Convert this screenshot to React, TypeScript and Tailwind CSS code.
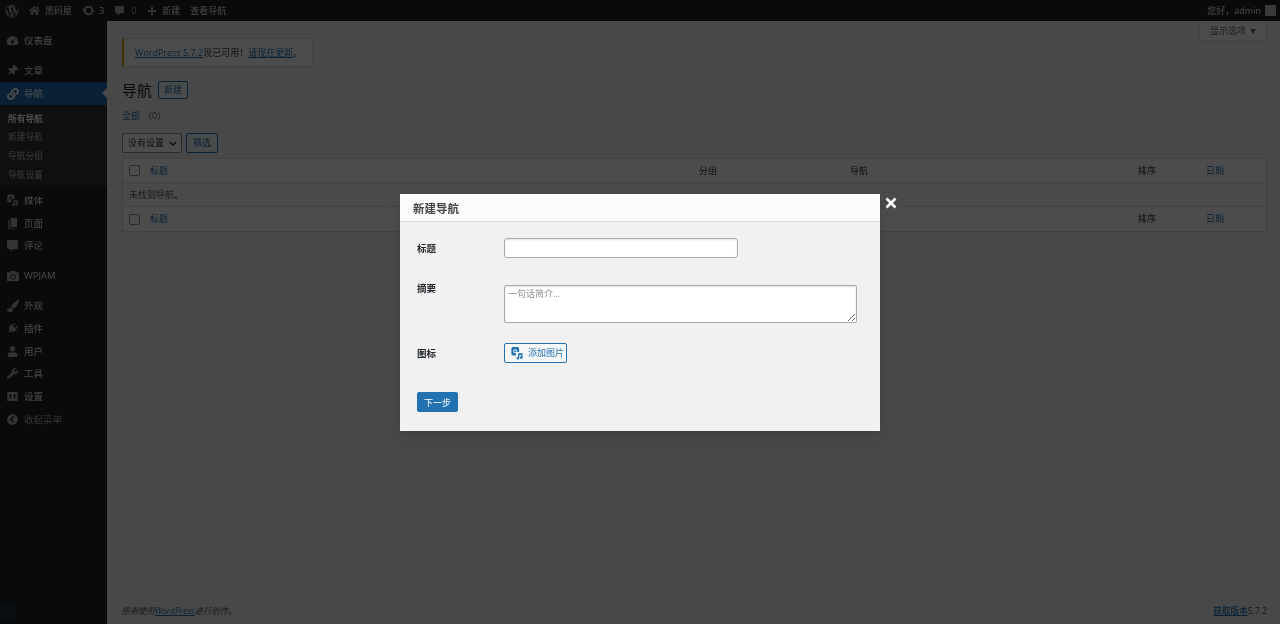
import { FaCommentAlt, FaPlus, FaThumbtack, FaLink, FaPaintBrush, FaPlug, FaUser, FaWrench, FaWordpress, FaHome, FaCamera, FaChevronCircleLeft } from 'react-icons/fa';
import type { ReactNode } from 'react';

const stack = "font-['Open_Sans','Noto_Sans_CJK_SC',sans-serif]";

function MediaIcon({ className }: { className?: string }) {
  return (
    <svg viewBox="0 0 20 20" className={className} fill="currentColor">
      <path fillRule="evenodd" d="M2 4c0-1.4 1.1-2.5 2.5-2.5h6C11.9 1.500 13 2.600 13 4v4.500H10L8.500 10.500V13.500H4.500C3.100 13.500 2 12.400 2 11zM7.500 4.700a2.800 2.800 0 1 0 0 5.600 2.800 2.800 0 0 0 0-5.600z" />
      <circle cx="7.500" cy="7.500" r="1.500" />
      <path d="M11.500 10.500H18v6a1.900 1.900 0 1 1-1.800-1.900V12.800h-2.900v4.700a1.900 1.900 0 1 1-1.800-1.900z" />
    </svg>
  );
}

function DashboardIcon({ className }: { className?: string }) {
  return (
    <svg viewBox="0 0 20 20" className={className} fill="currentColor">
      <path fillRule="evenodd" d="M10 3a9 9 0 0 0-9 9c0 2 .7 3.500 1.700 5h14.600c1-1.500 1.700-3 1.700-5a9 9 0 0 0-9-9zm0 6.500a2.500 2.500 0 1 0 .01 0zM10 13l3.500-5-1.500-.7z" />
    </svg>
  );
}

function UpdateIcon({ className }: { className?: string }) {
  return (
    <svg viewBox="0 0 20 20" className={className} fill="none" stroke="currentColor" strokeWidth="3.200">
      <circle cx="10" cy="10" r="5.800" />
      <path d="M0 10h6L3 6.500zM20 10h-6l3 3.500z" fill="currentColor" stroke="none" />
    </svg>
  );
}

function PagesIcon({ className }: { className?: string }) {
  return (
    <svg viewBox="0 0 20 20" className={className} fill="currentColor">
      <path d="M7 1.500h10v14H7z" />
      <path d="M3.500 4.500H5.500v13h8.500v1.500H3.500z" />
    </svg>
  );
}

function SettingsIcon({ className }: { className?: string }) {
  return (
    <svg viewBox="0 0 20 20" className={className} fill="currentColor">
      <path fillRule="evenodd" d="M2 3h16v14H2zM6 6v3H4.500v1.500H6V14h1.500v-3.500H9V9H7.500V6zM12.500 6v2H11v1.500h1.500V14H14V9.500h1.500V8H14V6z" />
    </svg>
  );
}

function MenuItem({ icon, label, className = '', active = false, muted = false }: { icon: ReactNode; label: string; className?: string; active?: boolean; muted?: boolean }) {
  return (
    <div className={`relative flex h-[22.8px] items-center gap-[5px] pl-[6px] text-[9.5px] ${active ? 'bg-[#2271b1] text-white' : muted ? 'text-[#a7aaad]' : 'text-[#f0f0f1]'} ${className}`}>
      <span className={`flex w-[13px] justify-center ${active ? 'text-white' : 'text-[#a7aaad]'}`}>{icon}</span>
      <span className="pt-[1px]">{label}</span>
      {active && <span className="absolute right-0 top-[6px] h-0 w-0 border-y-[5px] border-r-[5px] border-y-transparent border-r-[#f0f0f1]" />}
    </div>
  );
}

function TableRow({ foot = false }: { foot?: boolean }) {
  return (
    <div className={`flex h-[24px] items-center text-[9px] text-[#2c3338] ${foot ? '' : 'border-b border-[#dcdcde]'}`}>
      <span className="ml-[6px] h-[11px] w-[11px] rounded-[2px] border border-[#8c8f94] bg-white" />
      <span className="ml-[10px] w-[549px] text-[#2271b1]">标题</span>
      <span className="w-[151px]">分组</span>
      <span className="w-[288px]">导航</span>
      <span className="w-[68px]">排序</span>
      <span className="text-[#2271b1]">日期</span>
    </div>
  );
}

export default function App() {
  return (
    <div className={`relative h-[624px] w-[1280px] overflow-hidden bg-[#f0f0f1] blur-[0.45px] ${stack}`}>
      <header className="flex h-[21px] items-center bg-[#1d2327] pl-[5px] pr-[4px] text-[9px] text-[#f0f0f1]">
        <FaWordpress className="h-[14px] w-[14px] text-[#a7aaad]" />
        <FaHome className="ml-[10px] h-[11px] w-[11px] text-[#a7aaad]" />
        <span className="ml-[5px]">黑码屋</span>
        <UpdateIcon className="ml-[10px] h-[13px] w-[13px] text-[#a7aaad]" />
        <span className="ml-[4px]">3</span>
        <FaCommentAlt className="ml-[11px] h-[9px] w-[9px] text-[#a7aaad]" />
        <span className="ml-[7px] text-[#a7aaad]">0</span>
        <FaPlus className="ml-[11px] h-[10px] w-[10px] text-[#a7aaad]" />
        <span className="ml-[5px]">新建</span>
        <span className="ml-[10px]">查看导航</span>
        <span className="ml-auto">您好，admin</span>
        <span className="ml-[4px] h-[11px] w-[11px] bg-[#c3c4c7]" />
      </header>

      <div className="flex h-[603px]">
        <aside className="relative w-[107px] shrink-0 bg-[#1d2327] pt-[8px]">
          <MenuItem icon={<DashboardIcon className="h-[13px] w-[13px]" />} label="仪表盘" />
          <MenuItem className="mt-[7.6px]" icon={<FaThumbtack className="h-[11px] w-[11px] rotate-45" />} label="文章" />
          <MenuItem active icon={<FaLink className="h-[12px] w-[12px]" />} label="导航" />
          <div className="flex h-[82px] flex-col bg-[#2c3338] pl-[8px] pt-[4.5px] text-[8.7px] text-[#c3c4c7]">
            <span className="flex h-[18.7px] items-center pt-[1px] font-bold text-white">所有导航</span>
            <span className="flex h-[18.7px] items-center pt-[1px]">新建导航</span>
            <span className="flex h-[18.7px] items-center pt-[1px]">导航分组</span>
            <span className="flex h-[18.7px] items-center pt-[1px]">导航设置</span>
          </div>
          <MenuItem className="mt-[2px]" icon={<MediaIcon className="h-[14px] w-[14px]" />} label="媒体" />
          <MenuItem icon={<PagesIcon className="h-[13px] w-[13px]" />} label="页面" />
          <MenuItem icon={<FaCommentAlt className="h-[11px] w-[11px]" />} label="评论" />
          <MenuItem className="mt-[7px]" icon={<FaCamera className="h-[12px] w-[12px]" />} label="WPJAM" />
          <MenuItem className="mt-[7px]" icon={<FaPaintBrush className="h-[12px] w-[12px]" />} label="外观" />
          <MenuItem icon={<FaPlug className="h-[11px] w-[11px] rotate-45" />} label="插件" />
          <MenuItem icon={<FaUser className="h-[11px] w-[11px]" />} label="用户" />
          <MenuItem icon={<FaWrench className="h-[11px] w-[11px]" />} label="工具" />
          <MenuItem icon={<SettingsIcon className="h-[13px] w-[13px]" />} label="设置" />
          <MenuItem muted icon={<FaChevronCircleLeft className="h-[11px] w-[11px]" />} label="收起菜单" />
          <span className="absolute bottom-[4px] left-0 h-[16px] w-[16px] bg-[#2271b1]/20" />
        </aside>

        <main className="relative flex min-w-0 flex-1 flex-col pl-[15px] pr-[13px] text-[9px] text-[#3c434a]">
          <div className="flex justify-end">
            <span className="flex h-[20px] w-[68px] items-center justify-center gap-[4px] border border-t-0 border-[#dcdcde] bg-white pt-[1px] text-[9px] text-[#646970]">显示选项 <span className="text-[6px]">▼</span></span>
          </div>
          <div className="-mt-[3px] flex h-[29px] w-[191px] items-center border border-l-[2px] border-[#dcdcde] border-l-[#dba617] bg-white pl-[11px]">
            <span className="text-[#2271b1] underline">WordPress 5.7.2</span>
            <span>现已可用！</span>
            <span className="text-[#2271b1] underline">请现在更新</span>
            <span>。</span>
          </div>
          <div className="mt-[14px] flex h-[18px] items-center">
            <span className="text-[15px] text-[#1d2327]">导航</span>
            <span className="ml-[6px] flex h-[18px] w-[30px] items-center justify-center rounded-[2px] border border-[#2271b1] bg-[#f6f7f7] text-[#2271b1]">新建</span>
          </div>
          <div className="mt-[10px] flex h-[14px] items-center">
            <span className="text-[#2271b1]">全部</span>
            <span className="ml-[3px] text-[#50575e]">（0）</span>
          </div>
          <div className="mt-[10px] flex h-[20px] items-center gap-[4px]">
            <span className="flex h-[20px] w-[60px] items-center justify-between rounded-[2px] border border-[#8c8f94] bg-white pl-[5px] pr-[4px] text-[#2c3338]">
              没有设置
              <svg viewBox="0 0 10 6" className="h-[5px] w-[8px]" fill="none" stroke="currentColor" strokeWidth="1.800"><path d="M1 1l4 4 4-4" /></svg>
            </span>
            <span className="flex h-[20px] w-[32px] items-center justify-center rounded-[2px] border border-[#2271b1] bg-[#f6f7f7] text-[#2271b1]">筛选</span>
          </div>
          <div className="mt-[5px] border border-[#dcdcde] bg-white">
            <TableRow />
            <div className="flex h-[24px] items-center border-b border-[#dcdcde] bg-[#f6f7f7] pl-[6px] text-[#50575e]">未找到导航。</div>
            <TableRow foot />
          </div>
          <footer className="mt-auto flex h-[27px] items-center justify-between pt-[2px] text-[#50575e]">
            <span className="-ml-[1px] text-[8.45px] italic">感谢使用<span className="text-[#2271b1] underline">WordPress</span>进行创作。</span>
            <span className="text-[8.6px] font-medium"><span className="text-[#2271b1] underline">获取版本</span>5.7.2</span>
          </footer>
        </main>
      </div>

      <div className="absolute inset-0 bg-black/70" />

      <div className="absolute left-[400px] top-[194px] h-[237px] w-[480px] bg-[#f1f1f1] shadow-lg">
        <div className="flex h-[28px] items-center border-b border-[#dddddd] bg-[#fcfcfc] pl-[13px] pt-[2px] text-[11.5px] font-bold text-[#444444]">新建导航</div>
        <form className="flex flex-col px-[17px] text-[9.5px] font-semibold text-[#23282d]">
          <div className="mt-[16px] flex h-[20px] items-center">
            <label className="w-[87px] pt-[2px]">标题</label>
            <input className="h-[20px] w-[234px] rounded-[3px] border border-[#a8abae] bg-white shadow-[inset_0_1px_2px_rgba(0,0,0,0.12)] outline-none" />
          </div>
          <div className="mt-[27px] flex h-[38px] items-start">
            <label className="w-[87px] leading-[7px]">摘要</label>
            <textarea placeholder="一句话简介..." className="h-[38px] w-[353px] rounded-[2px] border border-[#a8abae] bg-white px-[3px] text-[9px] font-normal leading-[15px] shadow-[inset_0_1px_2px_rgba(0,0,0,0.12)] outline-none placeholder:text-[#8a8d90]" />
          </div>
          <div className="mt-[20px] flex h-[20px] items-center">
            <label className="w-[87px] pt-[2px]">图标</label>
            <span className="flex h-[20px] w-[63px] items-center rounded-[2px] border border-[#2271b1] bg-[#f6f7f7] pl-[5px] text-[9px] font-normal text-[#2271b1]">
              <MediaIcon className="h-[14px] w-[14px]" />
              <span className="ml-[4px]">添加图片</span>
            </span>
          </div>
          <button type="button" className="mt-[29px] h-[20px] w-[41px] rounded-[2px] border border-[#2271b1] bg-[#2271b1] pt-[1px] text-[9px] font-normal text-white">下一步</button>
        </form>
      </div>
      <span className="absolute left-[884px] top-[196px] flex h-[13px] w-[13px] items-center justify-center text-white">
        <svg viewBox="0 0 12 12" className="h-[12px] w-[12px]" fill="none" stroke="currentColor" strokeWidth="2.600"><path d="M1.500 1.500l9 9M10.500 1.500l-9 9" /></svg>
      </span>
    </div>
  );
}
